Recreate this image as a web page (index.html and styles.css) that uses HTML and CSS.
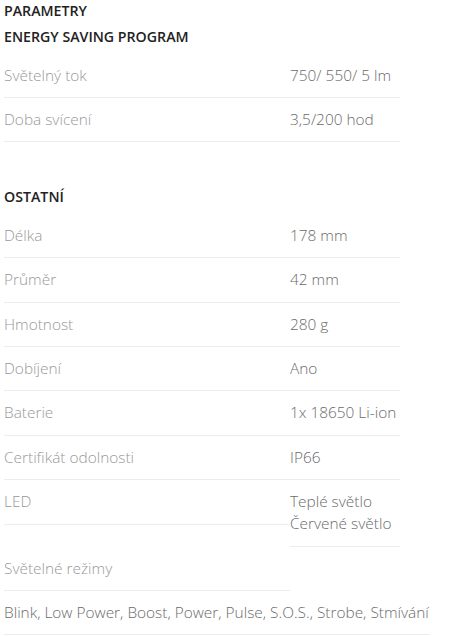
FILE: index.html
```html
<!DOCTYPE html>
<html lang="cs">
<head>
<meta charset="utf-8">
<title>Parametry</title>
<link rel="stylesheet" href="styles.css">
</head>
<body>
<div class="params">
  <h3 class="title title-top">PARAMETRY</h3>
  <h3 class="title title-sub">ENERGY SAVING PROGRAM</h3>
  <div class="row"><div class="label">Světelný tok</div><div class="value">750/ 550/ 5 lm</div></div>
  <div class="row"><div class="label">Doba svícení</div><div class="value">3,5/200 hod</div></div>

  <h3 class="title title-section">OSTATNÍ</h3>
  <div class="row"><div class="label">Délka</div><div class="value">178 mm</div></div>
  <div class="row"><div class="label">Průměr</div><div class="value">42 mm</div></div>
  <div class="row"><div class="label">Hmotnost</div><div class="value">280 g</div></div>
  <div class="row"><div class="label">Dobíjení</div><div class="value">Ano</div></div>
  <div class="row"><div class="label">Baterie</div><div class="value">1x 18650 Li-ion</div></div>
  <div class="row"><div class="label">Certifikát odolnosti</div><div class="value">IP66</div></div>
  <div class="row"><div class="label">LED</div><div class="value">Teplé světlo<br>Červené světlo</div></div>
  <div class="row"><div class="label">Světelné režimy</div><div class="value">Blink, Low Power, Boost, Power, Pulse, S.O.S., Strobe, Stmívání</div></div>
</div>
</body>
</html>
```
FILE: styles.css
```css
html, body {
  margin: 0;
  padding: 0;
  background: #fff;
}

body {
  font-family: "Open Sans", "Liberation Sans", sans-serif;
}

.params {
  padding: 0 0 0 4px;
}

.title {
  margin: 0;
  font-size: 14.2px;
  font-weight: 600;
  line-height: 18px;
  color: #222;
}

.title-top {
  padding-top: 2px;
}

.title-sub {
  margin-top: 8px;
  margin-bottom: 7.5px;
}

.title-section {
  margin-top: 46px;
  margin-bottom: 7.5px;
}

.row {
  display: flex;
  flex-wrap: wrap;
  align-items: flex-start;
}

.label,
.value {
  font-size: 15.4px;
  font-weight: 300;
  line-height: 22px;
  padding: 11px 0 10.4px;
  border-bottom: 1px solid #ececec;
}

.label {
  flex: 0 0 286px;
  color: #999;
}

.value {
  flex: 0 0 auto;
  min-width: 110px;
  color: #6b6b6b;
}
```
